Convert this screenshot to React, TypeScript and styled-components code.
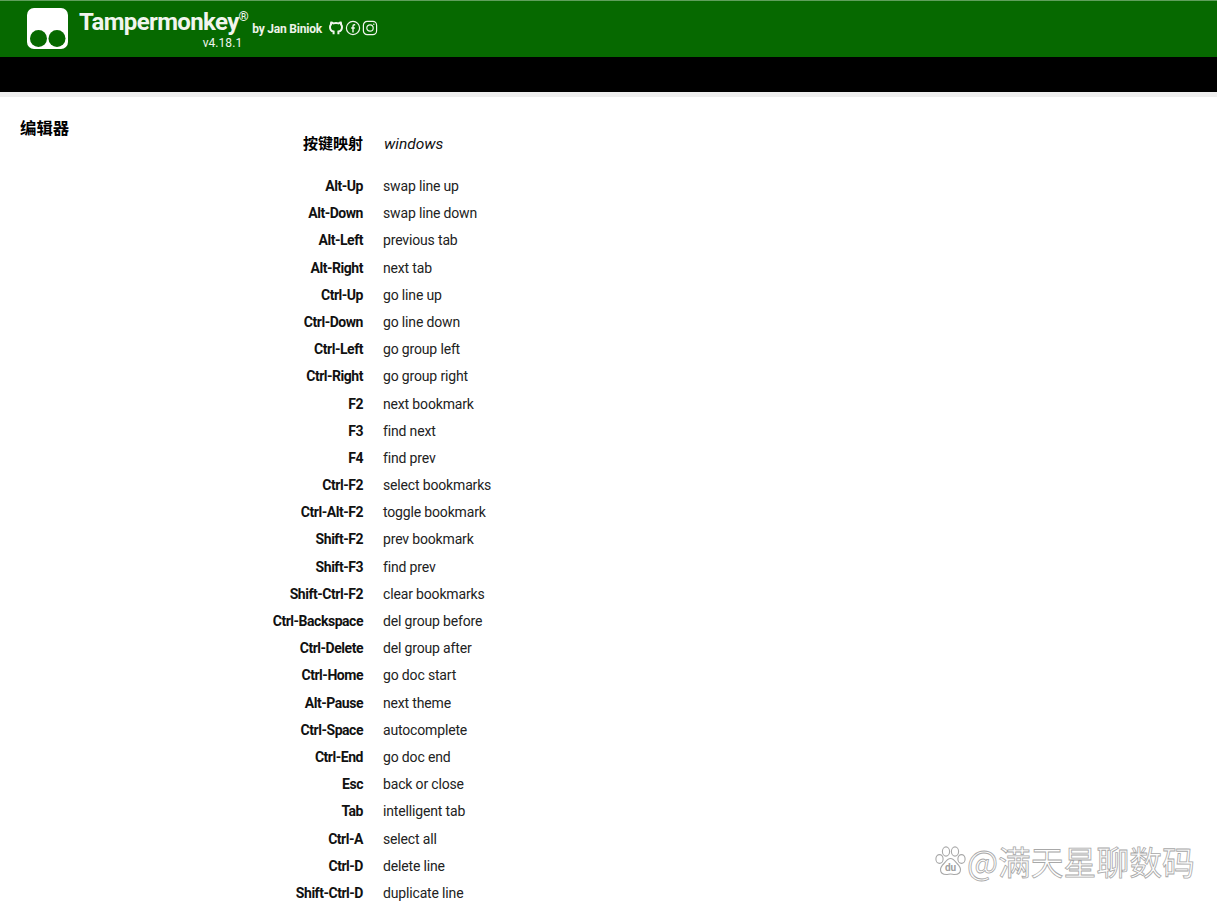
import React from 'react';
import styled, { createGlobalStyle } from 'styled-components';

const GlobalStyle = createGlobalStyle`
  html, body {
    margin: 0;
    padding: 0;
    background: #fff;
    overflow: hidden;
  }

  body {
    font-family: Roboto, 'Noto Sans CJK SC', sans-serif;
    color: #111;
  }
`;

const Page = styled.div`
  position: relative;
  width: 1217px;
  height: 905px;
  overflow: hidden;
`;

const Header = styled.div`
  display: flex;
  align-items: flex-start;
  height: 56px;
  padding-left: 27px;
  background: #066900;
  border-top: 1px solid #5f9f5c;
`;

const Logo = styled.svg`
  display: block;
  width: 41px;
  height: 41px;
  margin-top: 7px;
`;

const TitleBlock = styled.div`
  display: flex;
  flex-direction: column;
  align-items: flex-end;
  margin-left: 11px;
  color: #f1f5ee;
`;

const Title = styled.div`
  font-size: 24px;
  font-weight: 700;
  line-height: 28px;
  margin-top: 7px;
  letter-spacing: -0.64px;

  sup {
    font-size: 13px;
    font-weight: 700;
    line-height: 0;
    vertical-align: 9px;
  }
`;

const Version = styled.div`
  font-size: 12px;
  line-height: 14px;
  margin-top: 0;
  margin-right: 6px;
  letter-spacing: 0.05px;
`;

const ByLine = styled.div`
  margin: 20px 0 0 4px;
  font-size: 12px;
  font-weight: 700;
  line-height: 16px;
  letter-spacing: -0.2px;
  color: #eef3ea;
`;

const SocialIcons = styled.div`
  display: flex;
  gap: 1px;
  margin: 19px 0 0 6px;
  color: #f1f5ee;
`;

const ActionBar = styled.div`
  height: 35px;
  background: #000;
`;

const Divider = styled.div`
  height: 5px;
  background: #eeeeee;
`;

const Section = styled.div`
  display: flex;
  align-items: flex-start;
`;

const SectionTitle = styled.div`
  width: 180px;
  padding: 22px 0 0 20px;
  box-sizing: border-box;
  font-size: 16.4px;
  font-weight: 700;
  line-height: 20px;
  color: #000;
`;

const Options = styled.div`
  display: grid;
  grid-template-columns: 183px auto;
  justify-content: start;
  column-gap: 20px;
  padding-top: 35px;
`;

const HeadKey = styled.div`
  height: 41px;
  font-size: 15px;
  font-weight: 700;
  line-height: 24px;
  text-align: right;
  color: #000;
`;

const HeadValue = styled.div`
  height: 41px;
  font-size: 15.5px;
  font-style: italic;
  line-height: 24px;
  padding-left: 1px;
`;

const Key = styled.div`
  height: 27.19px;
  font-size: 14px;
  font-weight: 700;
  line-height: 27px;
  letter-spacing: -0.47px;
  text-align: right;
  color: #111;
`;

const Value = styled.div`
  height: 27.19px;
  font-size: 14px;
  line-height: 27px;
  letter-spacing: -0.16px;
  color: #222;
`;

const Watermark = styled.div`
  position: absolute;
  left: 934px;
  top: 842px;
  display: flex;
  align-items: center;
  gap: 1px;
  pointer-events: none;
`;

const WatermarkText = styled.div`
  font-family: 'Noto Sans CJK SC', sans-serif;
  font-size: 32.8px;
  line-height: 38px;
  color: #fff;
  -webkit-text-stroke: 0.8px #a8a8a8;
`;

const keymap: [string, string][] = [
  ['Alt-Up', 'swap line up'],
  ['Alt-Down', 'swap line down'],
  ['Alt-Left', 'previous tab'],
  ['Alt-Right', 'next tab'],
  ['Ctrl-Up', 'go line up'],
  ['Ctrl-Down', 'go line down'],
  ['Ctrl-Left', 'go group left'],
  ['Ctrl-Right', 'go group right'],
  ['F2', 'next bookmark'],
  ['F3', 'find next'],
  ['F4', 'find prev'],
  ['Ctrl-F2', 'select bookmarks'],
  ['Ctrl-Alt-F2', 'toggle bookmark'],
  ['Shift-F2', 'prev bookmark'],
  ['Shift-F3', 'find prev'],
  ['Shift-Ctrl-F2', 'clear bookmarks'],
  ['Ctrl-Backspace', 'del group before'],
  ['Ctrl-Delete', 'del group after'],
  ['Ctrl-Home', 'go doc start'],
  ['Alt-Pause', 'next theme'],
  ['Ctrl-Space', 'autocomplete'],
  ['Ctrl-End', 'go doc end'],
  ['Esc', 'back or close'],
  ['Tab', 'intelligent tab'],
  ['Ctrl-A', 'select all'],
  ['Ctrl-D', 'delete line'],
  ['Shift-Ctrl-D', 'duplicate line'],
];

const GithubIcon = () => (
  <svg width='16' height='16' viewBox='0 0 16 16' fill='none' stroke='currentColor' strokeWidth='2'>
    <path d='M5.6 14.2v-2.6c-1.7-.3-3.6-1.3-3.6-4.6 0-1 .4-1.900 1-2.500-.1-.6-.1-1.400.2-2 .8 0 1.600.4 2.200.9a8 8 0 0 1 5.200 0c.6-.5 1.400-.9 2.200-.9.3.6.3 1.400.2 2 .6.6 1 1.500 1 2.500 0 3.300-1.900 4.300-3.600 4.600v2.600' />
  </svg>
);

const FacebookIcon = () => (
  <svg width='16' height='16' viewBox='0 0 16 16' fill='none' stroke='currentColor' strokeWidth='1.2'>
    <circle cx='8' cy='8' r='6.6' />
    <path d='M10.2 4.8H9.3C8.5 4.8 8 5.3 8 6.1v6.4M6.2 8h3.6' strokeWidth='1.4' />
  </svg>
);

const InstagramIcon = () => (
  <svg width='16' height='16' viewBox='0 0 16 16' fill='none' stroke='currentColor' strokeWidth='1.2'>
    <rect x='1.4' y='1.4' width='13.2' height='13.2' rx='3.8' />
    <circle cx='8' cy='8' r='3.2' />
    <circle cx='11.8' cy='4.2' r='0.7' fill='currentColor' stroke='none' />
  </svg>
);

const BaiduPaw = () => (
  <svg width='32' height='32' viewBox='0 0 32 32' fill='#fff' stroke='#a8a8a8' strokeWidth='1.1'>
    <ellipse cx='5.5' cy='14' rx='3.6' ry='4.4' />
    <ellipse cx='12' cy='6.5' rx='3.6' ry='4.6' />
    <ellipse cx='21' cy='6.5' rx='3.6' ry='4.6' />
    <ellipse cx='27.5' cy='14' rx='3.6' ry='4.4' />
    <path d='M16.5 13.5c3 0 4.500 2.500 6.500 5 2 2 3.500 3.500 3.500 6 0 3.500-3 5-6 5-1.500 0-2.500-.5-4-.5s-2.500.5-4 .5c-3 0-6-1.500-6-5 0-2.500 1.500-4 3.500-6 2-2.500 3.500-5 6.500-5z' />
    <text x='16.500' y='26' textAnchor='middle' fontFamily='Roboto, sans-serif' fontSize='10' fontWeight='700' fill='#a0a0a0' stroke='none'>
      du
    </text>
  </svg>
);

export default function App() {
  return (
    <Page>
      <GlobalStyle />
      <Header>
        <Logo viewBox='0 0 41 41'>
          <rect width='41' height='41' rx='7' fill='#fff' />
          <circle cx='11.500' cy='30.500' r='8.500' fill='#066900' />
          <circle cx='30' cy='30.500' r='8.500' fill='#066900' />
        </Logo>
        <TitleBlock>
          <Title>
            Tampermonkey<sup>®</sup>
          </Title>
          <Version>v4.18.1</Version>
        </TitleBlock>
        <ByLine>by Jan Biniok</ByLine>
        <SocialIcons>
          <GithubIcon />
          <FacebookIcon />
          <InstagramIcon />
        </SocialIcons>
      </Header>
      <ActionBar />
      <Divider />
      <Section>
        <SectionTitle>编辑器</SectionTitle>
        <Options>
          <HeadKey>按键映射</HeadKey>
          <HeadValue>windows</HeadValue>
          {keymap.map(([key, action]) => (
            <React.Fragment key={key + action}>
              <Key>{key}</Key>
              <Value>{action}</Value>
            </React.Fragment>
          ))}
        </Options>
      </Section>
      <Watermark>
        <BaiduPaw />
        <WatermarkText>@满天星聊数码</WatermarkText>
      </Watermark>
    </Page>
  );
}
